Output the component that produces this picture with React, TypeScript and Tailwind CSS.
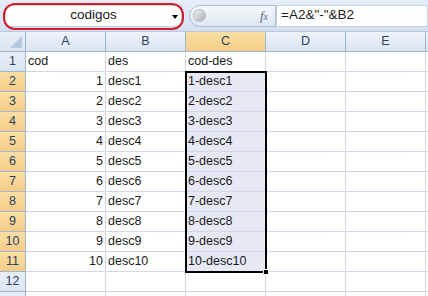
const cols = ["A", "B", "C", "D", "E"];

const rows: [string, string, string][] = [
  ["cod", "des", "cod-des"],
  ...Array.from({ length: 10 }, (_, i): [string, string, string] => [
    String(i + 1),
    `desc${i + 1}`,
    `${i + 1}-desc${i + 1}`,
  ]),
  ["", "", ""],
  ["", "", ""],
];

function RowHead({ n, active }: { n: number; active: boolean }) {
  return (
    <div
      className={
        "w-[26px] shrink-0 h-full flex items-center justify-center border-r border-b border-[#9eb6ce] text-[12.5px] text-[#2c4260] " +
        (active
          ? "bg-gradient-to-b from-[#fbdfa6] to-[#f6cc86]"
          : "bg-gradient-to-b from-[#e9eff8] to-[#dbe4f1]")
      }
    >
      {n < 13 ? n : ""}
    </div>
  );
}

export default function App() {
  return (
    <div
      className="w-[428px] h-[296px] overflow-hidden bg-white text-[#1a1a1a]"
      style={{ fontFamily: '"Liberation Sans", Arial, sans-serif' }}
    >
      {/* formula bar */}
      <div className="h-[32px] flex items-center bg-gradient-to-b from-[#e6eef9] to-[#d4e0f1] border-b border-[#b7c8de]">
        <div className="relative ml-[5px] w-[177px] h-[22px] bg-white border border-[#c4d3e6] flex items-center justify-center text-[13.5px]">
          codigos
          <div className="absolute right-[3px] top-[9px] w-0 h-0 border-l-[3px] border-r-[3px] border-t-[4px] border-l-transparent border-r-transparent border-t-black" />
          <div className="absolute -left-[3px] -top-[3px] -right-[3px] -bottom-[4px] border-2 border-[#cf1f28] rounded-[12px]" />
        </div>
        <div className="ml-[7px] w-[87px] h-[22px] rounded-l-[11px] border border-[#a9bdd6] bg-gradient-to-b from-[#f7f9fc] to-[#dce5f2] flex items-center">
          <div className="ml-[3px] w-[13px] h-[13px] rounded-full bg-gradient-to-br from-[#f4f4f4] to-[#a9acb2] border border-[#b4b9c2]" />
          <div className="ml-auto mr-[7px] text-[13px] italic text-[#5b6b80]" style={{ fontFamily: '"Liberation Serif", serif' }}>
            f<span className="text-[10px]">x</span>
          </div>
        </div>
        <div className="flex-1 h-[22px] bg-white border border-[#c4d3e6] flex items-center pl-[4px] text-[13.5px]">
          =A2&amp;"-"&amp;B2
        </div>
      </div>

      {/* sheet */}
      <div className="relative">
        <div className="flex h-[20px]">
          <div className="w-[26px] shrink-0 border-r border-b border-[#9eb6ce] bg-gradient-to-b from-[#e9eff8] to-[#dbe4f1] relative">
            <svg className="absolute right-[3px] bottom-[3px]" width="12" height="12">
              <polygon points="12,0 12,12 0,12" fill="#b6c8df" />
            </svg>
          </div>
          {cols.map((c) => (
            <div
              key={c}
              className={
                "w-[80px] shrink-0 flex items-center justify-center border-r border-b border-[#9eb6ce] text-[12.5px] text-[#2c4260] " +
                (c === "C"
                  ? "bg-gradient-to-b from-[#fbdfa6] to-[#f6cc86]"
                  : "bg-gradient-to-b from-[#eef3fa] to-[#dbe4f1]")
              }
            >
              {c}
            </div>
          ))}
          <div className="flex-1 border-b border-[#9eb6ce] bg-gradient-to-b from-[#eef3fa] to-[#dbe4f1]" />
        </div>

        {rows.map((r, i) => {
          const n = i + 1;
          const sel = n >= 2 && n <= 11;
          return (
            <div key={n} className="flex h-[20px] text-[12.5px]">
              <RowHead n={n} active={sel} />
              <div className="w-[80px] shrink-0 border-r border-b border-[#d0d7e5] flex items-center px-[2px] justify-end">
                {n === 1 ? <span className="mr-auto">{r[0]}</span> : r[0]}
              </div>
              <div className="w-[80px] shrink-0 border-r border-b border-[#d0d7e5] flex items-center px-[2px]">
                {r[1]}
              </div>
              <div
                className={
                  "w-[80px] shrink-0 border-r border-b border-[#d0d7e5] flex items-center px-[2px] " +
                  (sel ? "bg-[#e6e9f4]" : "")
                }
              >
                {r[2]}
              </div>
              <div className="w-[80px] shrink-0 border-r border-b border-[#d0d7e5]" />
              <div className="w-[80px] shrink-0 border-r border-b border-[#d0d7e5]" />
              <div className="flex-1 border-b border-[#d0d7e5]" />
            </div>
          );
        })}

        {/* selection outline */}
        <div className="absolute left-[185px] top-[39px] w-[82px] h-[202px] border-[2px] border-black pointer-events-none">
          <div className="absolute -right-[4px] -bottom-[4px] w-[6px] h-[6px] bg-black border border-white" />
        </div>
      </div>
    </div>
  );
}
